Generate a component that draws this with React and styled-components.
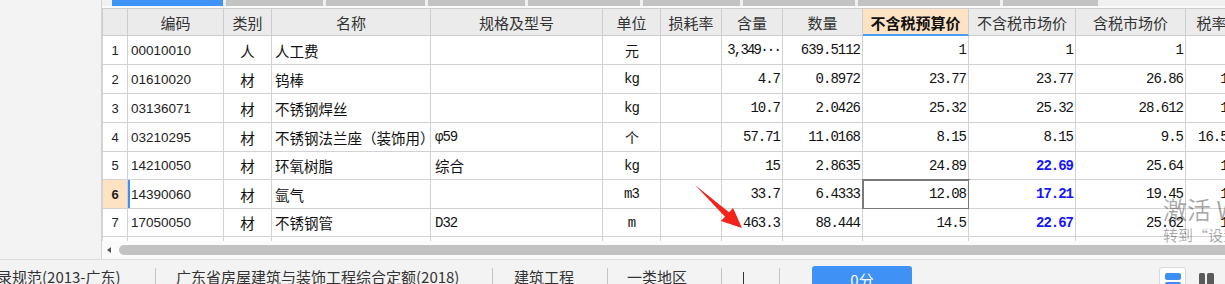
import React from 'react';
import styled, { createGlobalStyle } from 'styled-components';

const GlobalStyle = createGlobalStyle`
  html, body { margin: 0; padding: 0; width: 1225px; height: 284px; overflow: hidden; background: #fff; }
  #root { width: 1225px; height: 284px; }
  * { box-sizing: border-box; }
`;

const CJK = `"Noto Sans CJK SC", "Noto Sans", sans-serif`;
const SANS = `"Liberation Sans", "Noto Sans CJK SC", sans-serif`;
const MONO = `"Liberation Mono", "Noto Sans CJK SC", monospace`;

const COLS = [26, 96, 48, 159, 172, 58, 61, 61, 80, 106, 107, 110, 52];
const ROW_H = [29, 29, 29, 29, 28, 29, 28, 29];

const HEADERS = ['', '编码', '类别', '名称', '规格及型号', '单位', '损耗率', '含量', '数量', '不含税预算价', '不含税市场价', '含税市场价', '税率'];

const ROWS = [
  { code: '00010010', type: '人', name: '人工费', spec: '', unit: '元', qty: '3,349···', tight: true, amt: '639.5112', p1: '1', p2: '1', p3: '1', tax: '' },
  { code: '01610020', type: '材', name: '钨棒', spec: '', unit: 'kg', qty: '4.7', amt: '0.8972', p1: '23.77', p2: '23.77', p3: '26.86', tax: '13' },
  { code: '03136071', type: '材', name: '不锈钢焊丝', spec: '', unit: 'kg', qty: '10.7', amt: '2.0426', p1: '25.32', p2: '25.32', p3: '28.612', tax: '13' },
  { code: '03210295', type: '材', name: '不锈钢法兰座（装饰用）', spec: 'φ59', unit: '个', qty: '57.71', amt: '11.0168', p1: '8.15', p2: '8.15', p3: '9.5', tax: '16.56' },
  { code: '14210050', type: '材', name: '环氧树脂', spec: '综合', unit: 'kg', qty: '15', amt: '2.8635', p1: '24.89', p2: '22.69', hot: true, p3: '25.64', tax: '13' },
  { code: '14390060', type: '材', name: '氩气', spec: '', unit: 'm3', qty: '33.7', amt: '6.4333', p1: '12.08', p2: '17.21', hot: true, p3: '19.45', tax: '13', active: true },
  { code: '17050050', type: '材', name: '不锈钢管', spec: 'D32', unit: 'm', qty: '463.3', amt: '88.444', p1: '14.5', p2: '22.67', hot: true, p3: '25.62', tax: '13' },
  { code: '', type: '', name: '', spec: '', unit: '', qty: '', amt: '', p1: '', p2: '', p3: '', tax: '' },
];

const TABS = [
  { w: 111, blue: true }, { w: 97 }, { w: 99 }, { w: 97 }, { w: 112 }, { w: 97 }, { w: 112 }, { w: 142 }, { w: 95 },
];

const Page = styled.div`
  position: relative;
  width: 1225px;
  height: 284px;
  overflow: hidden;
  display: grid;
  grid-template-columns: minmax(0, 1fr);
  grid-template-rows: 259px 25px;
  background: #fff;
`;

const Main = styled.div`
  display: flex;
  min-height: 0;
  min-width: 0;
  overflow: hidden;
`;

const LeftPanel = styled.div`
  width: 102px;
  flex: none;
  background: #f3f3f3;
  border-right: 1px solid #d3d3d3;
`;

const GridPane = styled.div`
  flex: 1;
  min-width: 0;
  display: flex;
  flex-direction: column;
  overflow: hidden;
`;

const TabStrip = styled.div`
  height: 8px;
  flex: none;
  display: flex;
  gap: 3px;
  padding-left: 10px;
  background: #f0f0f0;
  border-bottom: 2px solid #fafafa;
`;

const Tab = styled.div`
  width: ${p => p.$w}px;
  height: 6px;
  flex: none;
  background: ${p => (p.$blue ? '#3f92f6' : '#c3c3c3')};
`;

const Viewport = styled.div`
  flex: 1;
  min-height: 0;
  overflow: hidden;
`;

const Table = styled.div`
  display: grid;
  width: max-content;
  grid-template-columns: ${COLS.map(c => `${c}px`).join(' ')};
  grid-template-rows: 28px ${ROW_H.map(h => `${h}px`).join(' ')};
`;

const HeadCell = styled.div`
  display: flex;
  align-items: center;
  justify-content: center;
  white-space: nowrap;
  overflow: hidden;
  background: ${p => (p.$active ? '#fde3c4' : '#ebebeb')};
  border-right: 1px solid #cdcdcd;
  border-top: 1px solid #cdcdcd;
  border-bottom: ${p => (p.$active ? '2px solid #4b9bf5' : '1px solid #cdcdcd')};
  border-left: ${p => (p.$first ? '1px solid #cdcdcd' : 'none')};
  font-family: ${CJK};
  font-size: 15px;
  font-weight: ${p => (p.$active ? 700 : 400)};
  color: ${p => (p.$active ? '#111' : '#333')};
  padding-top: 1px;
`;

const Cell = styled.div`
  display: flex;
  align-items: center;
  justify-content: ${p => (p.$align === 'right' ? 'flex-end' : p.$align === 'center' ? 'center' : 'flex-start')};
  padding: 0 ${p => (p.$align === 'right' ? '2px' : '0')} 0 ${p => (p.$align === 'left' ? '3px' : '0')};
  white-space: nowrap;
  overflow: hidden;
  background: ${p => (p.$peach ? '#fde3c4' : '#fff')};
  border-right: 1px solid #d2d2d2;
  border-bottom: 1px solid #d2d2d2;
  border-left: ${p => (p.$first ? '1px solid #d2d2d2' : 'none')};
  box-shadow: ${p => (p.$mark ? 'inset 2px 0 0 #3d8ef5' : 'none')};
  outline: ${p => (p.$selected ? '2px solid #7a7a7a' : 'none')};
  outline-offset: -1px;
  color: #111;
`;

const IndexCell = styled(Cell)`
  font-family: ${SANS};
  font-size: 13px;
  font-weight: ${p => (p.$peach ? 700 : 400)};
  color: #222;
`;

const CodeCell = styled(Cell)`
  font-family: ${SANS};
  font-size: 13.5px;
  color: #222;
`;

const TextCell = styled(Cell)`
  font-family: ${CJK};
  font-size: 14.5px;
  color: #111;
`;

const MonoCell = styled(Cell)`
  font-family: ${MONO};
  font-size: 14px;
  letter-spacing: ${p => (p.$tight ? '-1.8px' : '-1px')};
  font-weight: ${p => (p.$hot ? 700 : 400)};
  color: ${p => (p.$hot ? '#1414ff' : '#111')};
`;

const SpecCell = styled(Cell)`
  font-family: ${p => (p.$cjk ? CJK : MONO)};
  font-size: ${p => (p.$cjk ? '14.5px' : '14px')};
  letter-spacing: ${p => (p.$cjk ? '0' : '-1px')};
  padding-left: 4px;
`;

const HScroll = styled.div`
  height: 18px;
  flex: none;
  display: flex;
  align-items: center;
  background: #fbfbfb;
  padding-left: 5px;
  overflow: hidden;
`;

const ArrowLeft = styled.div`
  width: 0;
  height: 0;
  border-top: 3.5px solid transparent;
  border-bottom: 3.5px solid transparent;
  border-right: 4px solid #555;
  flex: none;
`;

const Thumb = styled.div`
  margin-left: 8px;
  height: 10px;
  flex: 1;
  margin-right: -20px;
  border-radius: 5px;
  background: #c2c2c2;
`;

const StatusBar = styled.div`
  display: flex;
  align-items: flex-start;
  min-width: 0;
  background: #f3f3f3;
  border-top: 1px solid #dcdcdc;
  overflow: hidden;
  font-family: ${CJK};
  font-size: 15px;
  color: #333;
`;

const StatusItem = styled.div`
  width: ${p => p.$w}px;
  flex: none;
  margin-left: ${p => p.$shift || 0}px;
  padding-left: ${p => p.$pad}px;
  padding-top: 7px;
  line-height: 20px;
  white-space: nowrap;
`;

const Sep = styled.div`
  width: 1px;
  height: 17px;
  margin-top: 8px;
  flex: none;
  background: #c5c5c5;
`;

const Caret = styled.div`
  width: 1px;
  height: 13px;
  margin-top: 12px;
  flex: none;
  background: #333;
`;

const ScoreButton = styled.div`
  margin-left: 32px;
  margin-top: 6px;
  width: 100px;
  height: 24px;
  flex: none;
  border-radius: 3px;
  background: #3f91f6;
  color: #fff;
  text-align: center;
  line-height: 22px;
  padding-top: 3px;
`;

const Spacer = styled.div`
  flex: 1;
  min-width: 0;
`;

const IconBox = styled.div`
  width: 27px;
  height: 24px;
  margin-top: 7px;
  flex: none;
  background: #fff;
  border: 1px solid #d9d9d9;
  border-radius: 3px;
  display: flex;
  justify-content: center;
  padding-top: 5px;
`;

const PlainIcon = styled.div`
  margin-left: 13px;
  margin-right: 11px;
  margin-top: 13px;
  flex: none;
  display: flex;
`;

const Watermark = styled.div`
  position: absolute;
  left: 1163px;
  top: 193px;
  font-family: ${CJK};
  color: rgba(0, 0, 0, 0.34);
  white-space: nowrap;
  pointer-events: none;
`;

const WmBig = styled.div`
  font-size: 24px;
  line-height: 32px;
`;

const WmSmall = styled.div`
  font-size: 15px;
  line-height: 20px;
`;

const ArrowOverlay = styled.svg`
  position: absolute;
  left: 690px;
  top: 180px;
  width: 60px;
  height: 54px;
  pointer-events: none;
`;

function DataRow({ r, i }) {
  const isActive = !!r.active;
  const isCJKSpec = /[\u4e00-\u9fff]/.test(r.spec);
  return (
    <>
      <IndexCell $align="center" $first $peach={isActive}>{r.code ? i + 1 : ''}</IndexCell>
      <CodeCell $align="left" $mark={isActive}>{r.code}</CodeCell>
      <TextCell $align="center">{r.type}</TextCell>
      <TextCell $align="left">{r.name}</TextCell>
      <SpecCell $align="left" $cjk={isCJKSpec}>{r.spec}</SpecCell>
      <MonoCell $align="center">{r.unit}</MonoCell>
      <MonoCell $align="right" />
      <MonoCell $align="right" $tight={r.tight}>{r.qty}</MonoCell>
      <MonoCell $align="right">{r.amt}</MonoCell>
      <MonoCell $align="right" $selected={isActive}>{r.p1}</MonoCell>
      <MonoCell $align="right" $hot={r.hot}>{r.p2}</MonoCell>
      <MonoCell $align="right">{r.p3}</MonoCell>
      <MonoCell $align="right">{r.tax}</MonoCell>
    </>
  );
}

export default function App() {
  return (
    <>
      <GlobalStyle />
      <Page>
        <Main>
          <LeftPanel />
          <GridPane>
            <TabStrip>
              {TABS.map((t, i) => <Tab key={i} $w={t.w} $blue={t.blue} />)}
            </TabStrip>
            <Viewport>
              <Table>
                {HEADERS.map((h, i) => (
                  <HeadCell key={`h${i}`} $first={i === 0} $active={i === 9}>{h}</HeadCell>
                ))}
                {ROWS.map((r, i) => <DataRow key={i} r={r} i={i} />)}
              </Table>
            </Viewport>
            <HScroll>
              <ArrowLeft />
              <Thumb />
            </HScroll>
          </GridPane>
        </Main>
        <StatusBar>
          <StatusItem $w={158} $pad={0} $shift={-3}>录规范(2013-广东)</StatusItem>
          <Sep />
          <StatusItem $w={336} $pad={20}>广东省房屋建筑与装饰工程综合定额(2018)</StatusItem>
          <Sep />
          <StatusItem $w={114} $pad={21}>建筑工程</StatusItem>
          <Sep />
          <StatusItem $w={113} $pad={19}>一类地区</StatusItem>
          <Sep />
          <StatusItem $w={21} $pad={0} />
          <Caret />
          <StatusItem $w={35} $pad={0} />
          <Sep />
          <ScoreButton>0分</ScoreButton>
          <Spacer />
          <IconBox>
            <svg width="16" height="16" viewBox="0 0 16 16">
              <rect x="0" y="0" width="16" height="7" rx="2" fill="#3d8ef5" />
              <rect x="0" y="9" width="16" height="7" rx="2" fill="#3d8ef5" />
            </svg>
          </IconBox>
          <PlainIcon>
            <svg width="15" height="14" viewBox="0 0 15 14">
              <rect x="0" y="0" width="6" height="16" rx="1.5" fill="#5a5a5a" />
              <rect x="8" y="0" width="7" height="16" rx="1.5" fill="#5a5a5a" />
            </svg>
          </PlainIcon>
        </StatusBar>

        <ArrowOverlay viewBox="0 0 60 54">
          <polygon points="5,5 39,32.3 43.1,27.9 52,48 30.9,41.1 35,36.7" fill="#f2231b" />
        </ArrowOverlay>

        <Watermark>
          <WmBig>激活 Windows</WmBig>
          <WmSmall>转到“设置”以激活 Windows。</WmSmall>
        </Watermark>
      </Page>
    </>
  );
}
